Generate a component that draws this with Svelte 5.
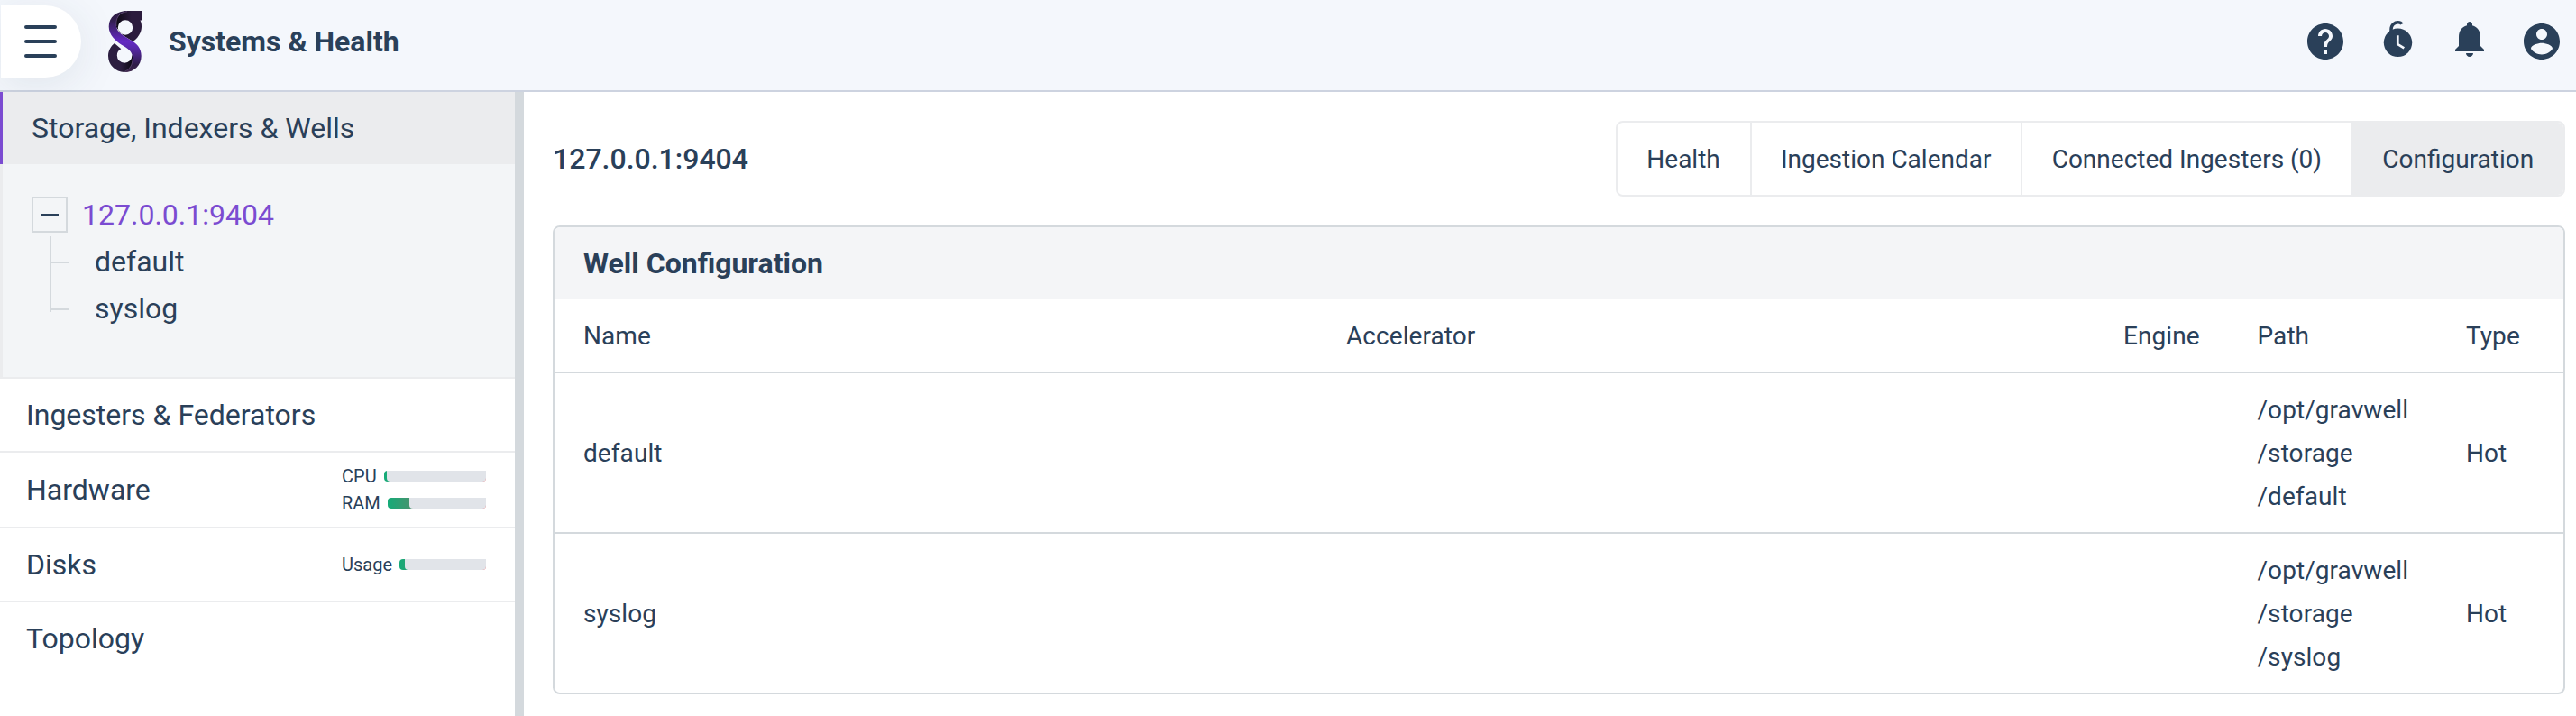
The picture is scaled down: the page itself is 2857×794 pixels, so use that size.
<script>
  const navItems = [
    { label: 'Ingesters & Federators', height: 80, meters: [] },
    {
      label: 'Hardware',
      height: 82,
      meters: [
        { label: 'CPU', value: 3 },
        { label: 'RAM', value: 22 }
      ]
    },
    { label: 'Disks', height: 80, meters: [{ label: 'Usage', value: 6 }] },
    { label: 'Topology', height: 80, meters: [] }
  ];
  const tabs = ['Health', 'Ingestion Calendar', 'Connected Ingesters (0)', 'Configuration'];
  const activeTab = 'Configuration';
  const wells = [
    { name: 'default', path: ['/opt/gravwell', '/storage', '/default'], type: 'Hot' },
    { name: 'syslog', path: ['/opt/gravwell', '/storage', '/syslog'], type: 'Hot' }
  ];
</script>

<div class="app">
  <header>
    <button class="menu" aria-label="Menu"><span></span><span></span><span></span></button>
    <svg class="logo" viewBox="0 0 38 68" width="38" height="68">
      <defs>
        <linearGradient id="ribbon" x1="0" y1="0" x2="0" y2="1">
          <stop offset="0" stop-color="#2c1d42" />
          <stop offset=".16" stop-color="#331f50" />
          <stop offset=".5" stop-color="#6429c4" />
          <stop offset=".6" stop-color="#5a28ae" />
          <stop offset=".88" stop-color="#2e1c46" />
          <stop offset="1" stop-color="#41284f" />
        </linearGradient>
        <linearGradient id="upper" x1="0" y1="0" x2="1" y2="0">
          <stop offset="0" stop-color="#0c0913" />
          <stop offset=".6" stop-color="#2b1b3d" />
        </linearGradient>
        <linearGradient id="lower" x1="0" y1="0" x2="1" y2="0">
          <stop offset=".4" stop-color="#2c1e40" />
          <stop offset=".8" stop-color="#08060d" />
        </linearGradient>
      </defs>
      <path fill="url(#upper)" fill-rule="evenodd" d="M18 0H37.7V10.500H35.500C37.500 14 37.500 20 35.500 24.500C34 28 31 31.500 27.500 34L16 27L8 17V8ZM19 10.300a8.200 8.200 0 1 0 0 16.400a8.200 8.200 0 1 0 0-16.400Z" />
      <path fill="url(#lower)" fill-rule="evenodd" d="M7 36L14.300 42.300C11.500 43.500 9.800 46 9.800 49.500a8.300 8.300 0 0 0 16.600 0L35 44V56L27 66L18 68C8 67.500 0 60 0 50C0 44 3 39 7 36Z" />
      <path fill="url(#ribbon)" d="M22 0C9 0 .7 6.500 .7 17.500C.7 27 8 33.500 17 39C24 43.500 27 46 27 53C27 60 24 64.500 18 68C29 68 36.700 60.500 36.700 50C36.700 41.500 32 36.500 25 32.500C17 27.500 10 24.500 9 17C8 8.500 12 1.500 22 .6Z" />
      <path fill="none" stroke="#735b8b" stroke-width=".6" d="M21 .8C12 1.500 8 8.500 9 17M27 53C27 60 24 64.500 18 67.500" />
    </svg>
    <h1>Systems &amp; Health</h1>
    <div class="actions">
      <svg viewBox="0 0 24 24"><path d="M12 2C6.480 2 2 6.480 2 12s4.480 10 10 10 10-4.480 10-10S17.520 2 12 2zm1 17h-2v-2h2v2zm2.070-7.750l-.9.920C13.450 12.900 13 13.500 13 15h-2v-.5c0-1.100.45-2.100 1.170-2.830l1.240-1.260c.37-.36.590-.86.590-1.410 0-1.100-.9-2-2-2s-2 .9-2 2H8c0-2.210 1.790-4 4-4s4 1.790 4 4c0 .88-.36 1.680-.93 2.250z" /></svg>
      <svg viewBox="0 0 48 48">
        <circle cx="24.500" cy="25.300" r="15.700" />
        <path class="hook" d="M17 14V10.500C17 5.500 21 2.700 24.500 2.700c2.200 0 3.700.7 4.300 2.100" />
        <path class="hands" d="M24.300 17.300v9.800l7 4.300" />
      </svg>
      <svg class="bell" viewBox="0 0 24 24"><path d="M12 22c1.100 0 2-.9 2-2h-4c0 1.100.89 2 2 2zm6-6v-5c0-3.070-1.640-5.640-4.500-6.320V4c0-.83-.67-1.500-1.500-1.500s-1.500.67-1.500 1.500v.68C7.630 5.360 6 7.920 6 11v5l-2 2v1h16v-1l-2-2z" /></svg>
      <svg viewBox="0 0 24 24"><path d="M12 2C6.480 2 2 6.480 2 12s4.480 10 10 10 10-4.480 10-10S17.520 2 12 2zm0 3c1.660 0 3 1.340 3 3s-1.340 3-3 3-3-1.340-3-3 1.340-3 3-3zm0 14.200c-2.500 0-4.710-1.280-6-3.220.03-1.990 4-3.080 6-3.080 1.990 0 5.970 1.090 6 3.080-1.290 1.940-3.500 3.220-6 3.220z" /></svg>
    </div>
  </header>

  <div class="body">
    <aside>
      <div class="section-title">Storage, Indexers &amp; Wells</div>
      <div class="tree">
        <div class="node">
          <span class="toggle"><i></i></span>
          <span class="host">127.0.0.1:9404</span>
        </div>
        <ul>
          {#each wells as well}
            <li><span>{well.name}</span></li>
          {/each}
        </ul>
      </div>
      {#each navItems as item}
        <div class="nav" style:height="{item.height}px">
          <span>{item.label}</span>
          {#if item.meters.length}
            <div class="meters">
              {#each item.meters as meter}
                <div class="meter">
                  <span>{meter.label}</span>
                  <div class="bar"><div class="rest" style:width="{100 - meter.value}%"></div></div>
                </div>
              {/each}
            </div>
          {/if}
        </div>
      {/each}
    </aside>

    <main>
      <div class="top">
        <h2>127.0.0.1:9404</h2>
        <div class="tabs">
          {#each tabs as tab}
            <div class="tab" class:active={tab === activeTab}>{tab}</div>
          {/each}
        </div>
      </div>

      <section class="card">
        <h3>Well Configuration</h3>
        <div class="row head">
          <div>Name</div><div>Accelerator</div><div>Engine</div><div>Path</div><div>Type</div>
        </div>
        {#each wells as well}
          <div class="row">
            <div>{well.name}</div>
            <div></div>
            <div></div>
            <div>{#each well.path as part}<p>{part}</p>{/each}</div>
            <div>{well.type}</div>
          </div>
        {/each}
      </section>
    </main>
  </div>
</div>

<style>
  :global(body) {
    background: #fff;
  }
  .app {
    box-sizing: border-box;
    width: 2857px;
    height: 794px;
    overflow: hidden;
    display: flex;
    flex-direction: column;
    font-family: Roboto, sans-serif;
    font-size: 28px;
    color: #2a4059;
  }
  .app * {
    box-sizing: border-box;
  }
  h1, h2, h3, p, ul {
    margin: 0;
    padding: 0;
  }
  header {
    flex: none;
    height: 102px;
    border-bottom: 2px solid #cdd3e0;
    background: #f4f7fc;
    display: flex;
    align-items: flex-start;
  }
  .menu {
    width: 89px;
    height: 80px;
    margin: 6px 0 0 1px;
    padding: 0 0 0 26px;
    border: 0;
    border-radius: 0 40px 40px 0;
    background: #fff;
    box-shadow: 0 8px 48px rgba(42, 64, 89, 0.1);
    display: flex;
    flex-direction: column;
    justify-content: center;
    gap: 12px;
  }
  .menu span {
    width: 36px;
    height: 4px;
    border-radius: 2px;
    background: #2a4059;
  }
  .logo {
    margin: 12px 0 0 30px;
  }
  h1 {
    margin: 6px 0 0 29px;
    font-size: 32px;
    line-height: 80px;
    font-weight: 700;
  }
  .actions {
    margin: 22px 14px 0 auto;
    display: flex;
    gap: 32px;
  }
  .actions svg {
    width: 48px;
    height: 48px;
    fill: #2a4059;
    overflow: visible;
  }
  .actions .bell {
    margin-top: -3px;
  }
  .actions .hook {
    fill: none;
    stroke: #2a4059;
    stroke-width: 3.500;
  }
  .actions .hands {
    fill: none;
    stroke: #f4f7fc;
    stroke-width: 2.700;
  }
  .body {
    flex: 1;
    display: flex;
    min-height: 0;
  }
  aside {
    width: 581px;
    flex: none;
    border-right: 10px solid #d4d9dd;
    font-size: 32px;
  }
  .section-title {
    height: 80px;
    padding-left: 32px;
    border-left: 3px solid #7b4bd1;
    background: #ebecee;
    line-height: 80px;
  }
  .tree {
    height: 238px;
    padding: 36px 0 0 32px;
    border-left: 3px solid #ebecee;
    border-bottom: 2px solid #ebecee;
    background: #f3f5f7;
  }
  .node {
    display: flex;
    align-items: center;
    height: 40px;
  }
  .toggle {
    width: 40px;
    height: 40px;
    border: 2px solid #d4d9dd;
    display: flex;
    align-items: center;
    justify-content: center;
  }
  .toggle i {
    width: 19px;
    height: 3px;
    background: #2a4059;
  }
  .host {
    margin-left: 16px;
    color: #7b4bd1;
  }
  ul {
    margin: 4px 0 0 20px;
    height: 84px;
    border-left: 2px solid #d4d9dd;
    list-style: none;
  }
  li {
    height: 52px;
    display: flex;
    align-items: center;
    gap: 28px;
  }
  li span {
    padding-top: 4px;
  }
  li::before {
    content: '';
    width: 20px;
    height: 2px;
    margin-top: 6px;
    background: #d4d9dd;
  }
  .nav {
    box-sizing: content-box !important;
    border-bottom: 2px solid #ebecee;
    padding: 0 32px 0 29px;
    display: flex;
    align-items: center;
    justify-content: space-between;
  }
  .nav:last-child {
    border-bottom: 0;
  }
  .meters {
    width: 160px;
    display: flex;
    flex-direction: column;
    gap: 6px;
  }
  .meter {
    display: flex;
    align-items: center;
    gap: 8px;
    font-size: 20px;
    line-height: 24px;
  }
  .bar {
    flex: 1;
    height: 12px;
    border-radius: 4px;
    background: linear-gradient(90deg, #15ab78, #e8484f);
    display: flex;
    justify-content: flex-end;
  }
  .rest {
    background: #e1e4e9;
    border-radius: 0 0 4px 4px;
  }
  main {
    flex: 1;
    padding: 32px 12px 0 32px;
  }
  .top {
    height: 84px;
    display: flex;
    align-items: center;
    justify-content: space-between;
  }
  h2 {
    font-size: 32px;
    font-weight: 500;
  }
  .tabs {
    height: 84px;
    display: flex;
    border: 2px solid #ebecee;
    border-radius: 8px;
    overflow: hidden;
  }
  .tab {
    padding: 0 32.800px 0 32.400px;
    line-height: 82px;
    border-left: 2px solid #ebecee;
  }
  .tab:first-child {
    border-left: 0;
  }
  .active {
    background: #ebecee;
  }
  .card {
    margin-top: 32px;
    border: 2px solid #d4d9dd;
    border-radius: 8px;
    overflow: hidden;
  }
  h3 {
    height: 80px;
    padding-left: 32px;
    background: #f4f5f7;
    font-size: 32px;
    line-height: 80px;
    font-weight: 700;
  }
  .row {
    display: grid;
    grid-template-columns: 846px 862px 148.500px 231.500px 1fr;
    align-items: center;
    height: 178px;
    padding: 2px 0 0 32px;
    border-top: 2px solid #d4d9dd;
    line-height: 48px;
    letter-spacing: 0.070px;
  }
  .head {
    height: 80px;
    border-top: 0;
  }
</style>
